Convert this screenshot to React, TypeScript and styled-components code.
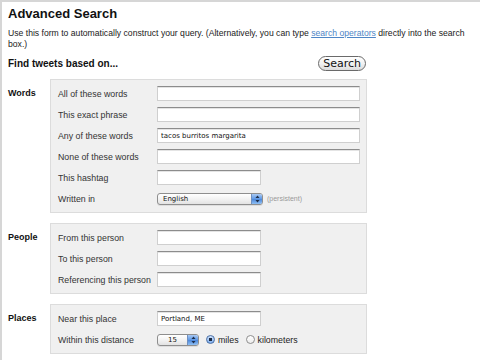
import React from "react";
import styled, { createGlobalStyle } from "styled-components";

const GlobalStyle = createGlobalStyle`
  html, body { margin: 0; padding: 0; background: #ffffff; }
  body { font-family: "Liberation Sans", Arial, sans-serif; color: #222; }
  * { box-sizing: border-box; }
`;

const Frame = styled.div`
  width: 480px;
  height: 360px;
  overflow: hidden;
  border-top: 2px solid #d6d6d6;
  border-left: 2px solid #d6d6d6;
  padding: 4px 6px 0 6px;
`;

const Title = styled.h1`
  margin: 0;
  font-size: 13px;
  line-height: 16px;
  font-weight: bold;
  color: #111;
`;

const Intro = styled.p`
  margin: 6px 0 0 0;
  font-size: 8.65px;
  line-height: 11px;
  color: #222;
  width: 468px;
`;

const Link = styled.a`
  color: #4f86c6;
  text-decoration: underline;
`;

const HeaderRow = styled.div`
  margin-top: 5px;
  width: 359px;
  height: 16px;
  display: flex;
  align-items: center;
  justify-content: space-between;
`;

const SubHeading = styled.h2`
  margin: 0;
  font-size: 10px;
  font-weight: bold;
  color: #111;
`;

const SearchButton = styled.button`
  height: 15px;
  padding: 0 4px;
  border: 1px solid #6a6a6a;
  border-radius: 8px;
  background: linear-gradient(#ffffff, #f2f2f2 50%, #dcdcdc);
  font-family: "DejaVu Sans", sans-serif;
  font-size: 11px;
  line-height: 13px;
  color: #111;
  margin-right: 1px;
`;

const Sections = styled.div`
  margin-top: 8px;
  display: flex;
  flex-direction: column;
  gap: 10px;
`;

const Section = styled.section`
  display: flex;
`;

const SectionLabel = styled.div`
  width: 42px;
  padding-top: 7px;
  line-height: 15px;
  font-size: 9px;
  font-weight: bold;
  color: #111;
`;

const Panel = styled.div`
  width: 317px;
  background: #f0f0f0;
  border: 1px solid #dcdcdc;
  padding: 6px 6px 6px 7px;
`;

const FieldGrid = styled.div`
  display: grid;
  grid-template-columns: 99px 1fr;
  grid-auto-rows: 15px;
  row-gap: 6px;
  align-items: center;
`;

const FieldLabel = styled.label`
  font-size: 8.8px;
  color: #333;
  white-space: nowrap;
`;

const TextInput = styled.input<{ $short?: boolean }>`
  width: ${(p) => (p.$short ? "104px" : "203px")};
  height: 15px;
  margin: 0;
  padding: 0 3px;
  border: 1px solid #cfcfcf;
  border-top-color: #8c8c8c;
  box-shadow: inset 0 1px 0 #e4e4e4;
  background: #fff;
  font-family: "DejaVu Sans", sans-serif;
  font-size: 7px;
  color: #111;
  outline: none;
`;

const ControlRow = styled.div`
  display: flex;
  align-items: center;
`;

const Select = styled.div<{ $width: number }>`
  width: ${(p) => p.$width}px;
  height: 12px;
  border: 1px solid #8e8e8e;
  border-radius: 3px;
  background: linear-gradient(#ffffff, #f1f1f1 55%, #e2e2e2);
  display: flex;
  align-items: center;
  overflow: hidden;
  box-shadow: 0 1px 0 rgba(0, 0, 0, 0.08);
`;

const SelectText = styled.span<{ $indent: number }>`
  flex: 1;
  padding-left: ${(p) => p.$indent}px;
  font-family: "DejaVu Sans", sans-serif;
  font-size: 7px;
  line-height: 10px;
  color: #111;
`;

const SelectArrow = styled.span`
  width: 11px;
  height: 100%;
  border-left: 1px solid #6f8fbf;
  background: linear-gradient(#a9c9f3, #5d98e6 50%, #4b86d9 51%, #8fc0f5);
  display: flex;
  align-items: center;
  justify-content: center;
`;

const Hint = styled.span`
  margin-left: 4px;
  font-size: 7px;
  color: #9a9a9a;
`;

const Radio = styled.span<{ $checked?: boolean }>`
  width: 9px;
  height: 9px;
  border-radius: 50%;
  margin: 0 3px 0 7px;
  border: 1px solid ${(p) => (p.$checked ? "#4a6fa5" : "#8e8e8e")};
  background: ${(p) =>
    p.$checked
      ? "radial-gradient(circle, #1c2a40 0 1.5px, transparent 2px), linear-gradient(#cfe2fb, #7eaeee)"
      : "linear-gradient(#ffffff, #ececec)"};
`;

const RadioLabel = styled.span`
  font-size: 8.8px;
  color: #222;
`;

const Arrows = () => (
  <svg width="5" height="8" viewBox="0 0 5 8">
    <path d="M2.5 0.5 L4.5 3 L0.5 3 Z" fill="#1d2d4a" />
    <path d="M2.5 7.5 L4.5 5 L0.5 5 Z" fill="#1d2d4a" />
  </svg>
);

const FakeSelect = ({ width, text, indent }: { width: number; text: string; indent: number }) => (
  <Select $width={width}>
    <SelectText $indent={indent}>{text}</SelectText>
    <SelectArrow>
      <Arrows />
    </SelectArrow>
  </Select>
);

type Field = { label: string; value?: string; short?: boolean };

const wordFields: Field[] = [
  { label: "All of these words" },
  { label: "This exact phrase" },
  { label: "Any of these words", value: "tacos burritos margarita" },
  { label: "None of these words" },
  { label: "This hashtag", short: true },
];

const peopleFields: Field[] = [
  { label: "From this person", short: true },
  { label: "To this person", short: true },
  { label: "Referencing this person", short: true },
];

const renderFields = (fields: Field[]) =>
  fields.map((f) => (
    <React.Fragment key={f.label}>
      <FieldLabel>{f.label}</FieldLabel>
      <TextInput $short={f.short} readOnly value={f.value ?? ""} />
    </React.Fragment>
  ));

export default function App() {
  return (
    <>
      <GlobalStyle />
      <Frame>
        <Title>Advanced Search</Title>
        <Intro>
          Use this form to automatically construct your query. (Alternatively, you can type{" "}
          <Link href="#">search operators</Link> directly into the search box.)
        </Intro>
        <HeaderRow>
          <SubHeading>Find tweets based on...</SubHeading>
          <SearchButton>Search</SearchButton>
        </HeaderRow>
        <Sections>
          <Section>
            <SectionLabel>Words</SectionLabel>
            <Panel>
              <FieldGrid>
                {renderFields(wordFields)}
                <FieldLabel>Written in</FieldLabel>
                <ControlRow>
                  <FakeSelect width={106} text="English" indent={5} />
                  <Hint>(persistent)</Hint>
                </ControlRow>
              </FieldGrid>
            </Panel>
          </Section>
          <Section>
            <SectionLabel>People</SectionLabel>
            <Panel>
              <FieldGrid>{renderFields(peopleFields)}</FieldGrid>
            </Panel>
          </Section>
          <Section>
            <SectionLabel>Places</SectionLabel>
            <Panel>
              <FieldGrid>
                {renderFields([{ label: "Near this place", value: "Portland, ME", short: true }])}
                <FieldLabel>Within this distance</FieldLabel>
                <ControlRow>
                  <FakeSelect width={42} text="15" indent={10} />
                  <Radio $checked />
                  <RadioLabel>miles</RadioLabel>
                  <Radio />
                  <RadioLabel>kilometers</RadioLabel>
                </ControlRow>
              </FieldGrid>
            </Panel>
          </Section>
        </Sections>
      </Frame>
    </>
  );
}
